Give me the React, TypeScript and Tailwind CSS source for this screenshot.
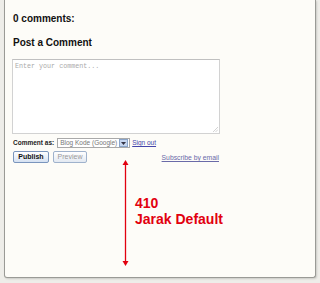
export default function App() {
  return (
    <div className="w-[320px] h-[283px] bg-[#eeede9] overflow-hidden" style={{ fontFamily: '"Liberation Sans", Arial, sans-serif' }}>
      <div className="ml-[4px] w-[312px] h-[278px] bg-[#fdfcf8] border-l border-r border-b border-[#9a9a96] rounded-b-[3px] shadow-[1px_1px_2px_rgba(0,0,0,0.15)] pl-[8px] pt-[13px]">
        <h3 className="text-[10px] leading-[12px] font-bold text-[#111]">0 comments:</h3>
        <h4 className="mt-[11px] text-[10px] leading-[13px] font-bold text-[#111]">Post a Comment</h4>
        <div className="relative -ml-px mt-[10px] w-[208px] h-[75px]">
          <textarea
            readOnly
            placeholder="Enter your comment..."
            className="block w-full h-full resize-none bg-white border border-[#d2d2d2] border-t-[#c0c0c0] px-[2px] pt-[2px] text-[6.7px] leading-[9px] placeholder:text-[#aaa] outline-none"
            style={{ fontFamily: '"Liberation Mono", "Courier New", monospace' }}
          />
          {/* resize grip */}
          <svg className="absolute right-[2px] bottom-[2px]" width="5" height="5" viewBox="0 0 5 5">
            <path d="M5 0 L0 5 M5 2.5 L2.5 5" stroke="#c8c8c8" strokeWidth="0.8" />
          </svg>
        </div>
        <div className="mt-[4px] flex items-center h-[10px]">
          <span className="text-[6.5px] font-bold text-[#222]">Comment as:</span>
          <div className="ml-[3px] flex items-center h-[10px] w-[73px] border border-[#a9a9a9] bg-white">
            <span className="flex-1 pl-[2px] text-[6.5px] leading-[8px] text-[#777] whitespace-nowrap overflow-hidden">Blog Kode (Google)</span>
            <span className="w-[9px] h-[8px] mr-px flex items-center justify-center bg-[#c6d6ef] border border-[#8aa4c8]">
              <svg width="5" height="3" viewBox="0 0 5 3"><path d="M0 0 L2.5 3 L5 0 Z" fill="#334" /></svg>
            </span>
          </div>
          <a className="ml-[2px] text-[6.5px] text-[#4444aa] underline">Sign out</a>
        </div>
        <div className="mt-[2px] flex items-center w-[206px] h-[13px]">
          <button className="h-[12px] w-[36px] border border-[#7a95bd] rounded-[2px] bg-gradient-to-b from-[#ffffff] to-[#d5e1f2] text-[7px] font-bold text-[#111] leading-none">Publish</button>
          <button className="ml-[4px] h-[12px] w-[34px] border border-[#9fb2cc] rounded-[2px] bg-gradient-to-b from-[#ffffff] to-[#e3e9f2] text-[7px] text-[#999] leading-none">Preview</button>
          <a className="ml-auto mt-[4px] text-[6.8px] text-[#6a6aa8] underline whitespace-nowrap">Subscribe by email</a>
        </div>
        <div className="-mt-[3px] flex">
          <svg className="ml-[109px]" width="7" height="106" viewBox="0 0 7 106">
            <line x1="3.5" y1="4" x2="3.5" y2="102" stroke="#e2000f" strokeWidth="1.3" />
            <path d="M0.5 5 L3.5 0 L6.5 5 Z" fill="#e2000f" />
            <path d="M0.5 101 L3.5 106 L6.5 101 Z" fill="#e2000f" />
          </svg>
          <div className="ml-[6px] mt-[35px] text-[14px] leading-[16px] font-bold text-[#e2000f]">
            <div>410</div>
            <div>Jarak Default</div>
          </div>
        </div>
      </div>
    </div>
  );
}
